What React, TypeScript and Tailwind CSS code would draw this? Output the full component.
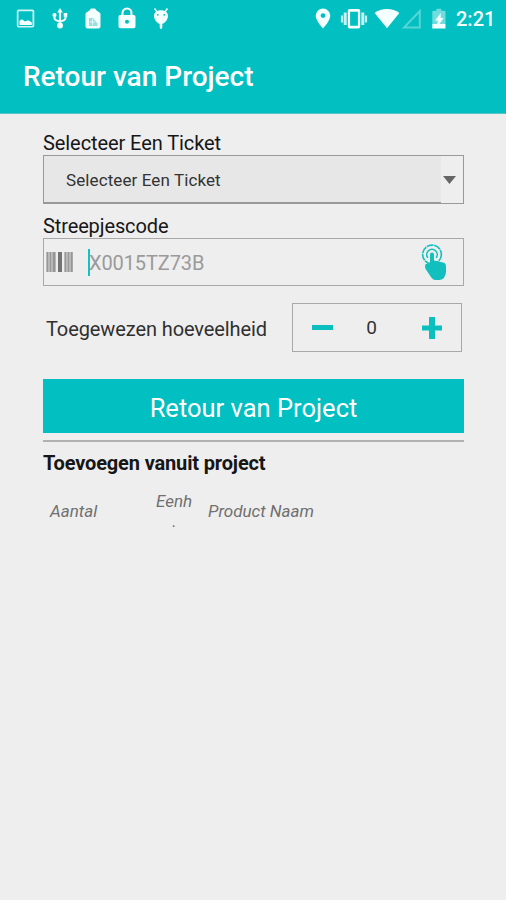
import type { ReactNode } from "react";

function Glyph({ w, h, className, children }: { w: number; h: number; className?: string; children: ReactNode }) {
  return (
    <svg width={w} height={h} viewBox={`0 0 ${w} ${h}`} className={`block shrink-0 ${className ?? ""}`} fill="currentColor">
      {children}
    </svg>
  );
}

function StatusBar() {
  return (
    <div className="flex h-[38px] items-center pl-[16px] text-[#f4ffff]">
      <Glyph w={19} h={24}>
        <path fillRule="evenodd" d="M2.500 2.500h14a1.800 1.800 0 0 1 1.800 1.800v14.500a1.800 1.800 0 0 1-1.800 1.800h-14A1.800 1.800 0 0 1 .8 18.800V4.300A1.800 1.800 0 0 1 2.500 2.500ZM2.500 4.300v14.700h14V4.300Z" opacity=".85" />
        <path d="M3.500 18v-4.300l2.500-1.400 3 2.200 3-1.200 3.800 2V18Z" />
      </Glyph>
      <Glyph w={16} h={24} className="ml-[17px]">
        <path d="M8 1 10.800 5.500H5.200Z" />
        <circle cx="8" cy="18.500" r="3" />
        <circle cx="2.500" cy="8" r="2.100" />
        <path d="M11.700 6h3.600v3.800h-3.600Z" />
        <path d="M8 5v13M2.500 8.500v2.500q0 2.500 5.500 3.500M13.500 8.500v2.500q0 2.500-5.500 3.500" fill="none" stroke="currentColor" strokeWidth="2.100" />
      </Glyph>
      <Glyph w={16} h={24} className="ml-[17px]">
        <path d="M5 3q0-1.500 1.500-1.500h3Q11 1.500 11 3l3.500 2.500q1 .6 1 1.500v12.500q0 2-2 2h-11q-2 0-2-2V7q0-.9 1-1.500Z" />
        <path d="M4 11v8h8.500v-2.500L8 11Z" fill="#9adfdf" />
        <path d="M5 15h5M7.500 12v6" stroke="#effafa" strokeWidth=".8" />
      </Glyph>
      <Glyph w={18} h={24} className="ml-[17px]">
        <path d="M4.500 9V6a4.500 4.500 0 0 1 9 0V9" fill="none" stroke="currentColor" strokeWidth="2.100" />
        <path fillRule="evenodd" d="M2.200 8h13.600q1.700 0 1.700 1.700v9.800q0 1.700-1.700 1.700H2.200q-1.700 0-1.700-1.700V9.700Q.5 8 2.200 8ZM9 12.800a2 2 0 1 0 0 4 2 2 0 0 0 0-4Z" />
      </Glyph>
      <Glyph w={16} h={24} className="ml-[17px]">
        <path d="M1.500 1.500 5 6M14.500 1.500 11 6" stroke="currentColor" strokeWidth="1.500" />
        <path d="M8 3.200c4.500 0 7 2.600 7 5.800s-3 8-7 8-7-4.800-7-8 2.500-5.800 7-5.800Z" />
        <path d="M6.700 15h2.600v5q0 2-1.300 2t-1.300-2Z" />
        <circle cx="4.800" cy="7.800" r=".9" fill="#02bfc1" />
        <circle cx="11.200" cy="7.800" r=".9" fill="#02bfc1" />
      </Glyph>
      <Glyph w={16} h={24} className="ml-[146px]">
        <path fillRule="evenodd" d="M8 1.500a7.300 7.300 0 0 1 7.300 7.300c0 5-7.300 12.600-7.300 12.600S.7 13.800.7 8.800A7.300 7.300 0 0 1 8 1.500Zm0 4.700a2.400 2.400 0 1 0 0 4.800 2.400 2.400 0 0 0 0-4.800Z" />
      </Glyph>
      <Glyph w={28} h={24} className="ml-[9px]">
        <path fillRule="evenodd" d="M9.500 2h9q1.700 0 1.700 1.700v16q0 1.700-1.700 1.700h-9q-1.700 0-1.700-1.700v-16Q7.800 2 9.500 2Zm.6 2.700v14h7.800v-14Z" />
        <path d="M2 8.500v7M26 8.500v7" stroke="currentColor" strokeWidth="2.200" opacity=".8" />
        <path d="M5.200 5.500v12.500M22.800 5.500v12.500" stroke="currentColor" strokeWidth="3" opacity=".8" />
      </Glyph>
      <Glyph w={26} h={24} className="ml-[6px]">
        <path d="M.6 6C7 .6 19 .6 25.400 6L13 21.300Z" />
      </Glyph>
      <Glyph w={20} h={24} className="ml-[2px] opacity-35">
        <path d="M17.800 4v16.500H2Z" fill="none" stroke="currentColor" strokeWidth="2" />
      </Glyph>
      <Glyph w={16} h={24} className="ml-[9px]">
        <path d="M5.500 1.800h4.800v1.900h3q1.200 0 1.200 1.200V17H1.300V4.900q0-1.200 1.200-1.200h3Z" opacity=".45" />
        <path d="M1.300 17h5l.5-3.500H4L9.700 6v5h2.800L8.500 17h6v4.500H1.300Z" />
      </Glyph>
      <span className="ml-[9px] text-[20px] font-medium leading-6">2:21</span>
    </div>
  );
}

function TapIcon() {
  return (
    <svg width="26" height="36" viewBox="0 0 26 36" className="block" fill="#12bfbf">
      <circle cx="11" cy="10.500" r="9.400" fill="none" stroke="#12bfbf" strokeWidth="1.600" strokeDasharray="7 .7" />
      <path d="M6.900 13.800a5.200 5.200 0 1 1 8.200 0" fill="none" stroke="#12bfbf" strokeWidth="1.600" />
      <path d="M9 10.500a2 2 0 0 1 4 0V16.500l10 2.200q2 1 2 3.400v6q0 2-1 3.300-1 4.200-5.500 4.500h-4q-2.500 0-4.200-2.500L4.600 25q-1.200-3.600.2-5 1.700-.8 4.200 .2Z" />
    </svg>
  );
}

function BarcodeIcon() {
  return (
    <svg width="27" height="20" viewBox="0 0 27 20" className="block">
      <path fill="#b8b8b8" d="M0 0h10v20H0ZM18 0h9v20h-9Z" />
      <path fill="#979797" d="M1 0h1v20H1ZM4 0h1v20H4ZM7 0h2v20H7ZM19 0h1v20h-1ZM22 0h1v20h-1ZM25 0h1.500v20H25Z" />
      <path fill="#747474" d="M12 0h4v20h-4Z" />
    </svg>
  );
}

export default function App() {
  return (
    <div className="flex h-[900px] w-[506px] flex-col overflow-hidden bg-[#eeeeee] font-[Roboto,sans-serif] text-[#161616]">
      <header className="h-[114px] shrink-0 border-b border-[#58c5c6] bg-[#02bfc1] text-white">
        <StatusBar />
        <h1 className="mt-[21px] pl-[23px] text-[28px] font-medium leading-9">Retour van Project</h1>
      </header>

      <main className="flex w-[464px] flex-col pl-[43px]">
        <label className="mt-[17px] h-[24px] text-[20px] leading-6 tracking-[-0.08px]">Selecteer Een Ticket</label>
        <div className="flex h-[49px] w-[421px] border border-[#999999]">
          <div className="flex w-[397px] items-center border-b border-[#999999] bg-[#e7e7e7] pl-[22px] pt-[3px] text-[17px] tracking-[0.1px] text-[#333333]">Selecteer Een Ticket</div>
          <div className="flex flex-1 items-center justify-center">
            <svg width="13" height="8" viewBox="0 0 13 8" className="mr-[5px] shrink-0"><path d="M0 0h13L6.500 8Z" fill="#666666" /></svg>
          </div>
        </div>

        <label className="mt-[10px] h-[24px] text-[20px] leading-6 tracking-[-0.12px]">Streepjescode</label>
        <div className="flex h-[48px] w-[421px] items-center border border-[#a8a8a8] pl-[2px]">
          <BarcodeIcon />
          <div className="ml-[15px] h-[27px] w-[2px] bg-[#12c2c2]" />
          <span className="-ml-px flex-1 pt-[2px] text-[20px] tracking-[-0.1px] text-[#9a9a9a]">X0015TZ73B</span>
          <div className="mr-[16px]"><TapIcon /></div>
        </div>

        <div className="mt-[17px] flex h-[49px] w-[419px] items-center justify-between">
          <span className="ml-[3px] pt-[2px] text-[20px] tracking-[-0.1px] text-[#303030]">Toegewezen hoeveelheid</span>
          <div className="flex h-[49px] w-[170px] items-center border border-[#a8a8a8] pl-[19px]">
            <div className="h-[5px] w-[21px] bg-[#0bbfbf]" />
            <span className="ml-[32px] w-[13px] pt-[2px] text-center text-[19px] text-[#333333]">0</span>
            <svg width="20" height="22" viewBox="0 0 20 22" className="ml-[44px]"><path d="M7 0h6v8.500h7v5h-7V22H7v-8.500H0v-5h7Z" fill="#0bbfbf" /></svg>
          </div>
        </div>

        <button className="mt-[27px] h-[54px] w-[421px] bg-[#02bfc1] pt-[3px] text-[25.5px] leading-8 text-white">Retour van Project</button>
        <hr className="mt-[7px] w-[421px] border-t-2 border-[#b1b1b1]" />
        <h2 className="mt-[9px] h-6 text-[20px] font-bold leading-6 tracking-[-0.15px]">Toevoegen vanuit project</h2>
        <div className="mt-[12px] flex h-[48px] w-[421px] items-center text-[17px] italic leading-6 text-[#707070]">
          <span className="ml-[7px] w-[100px]">Aantal</span>
          <span className="flex w-[48px] flex-col items-center pb-1"><span>Eenh</span><span className="pl-px leading-4">.</span></span>
          <span className="ml-[10px]">Product Naam</span>
        </div>
      </main>
    </div>
  );
}
